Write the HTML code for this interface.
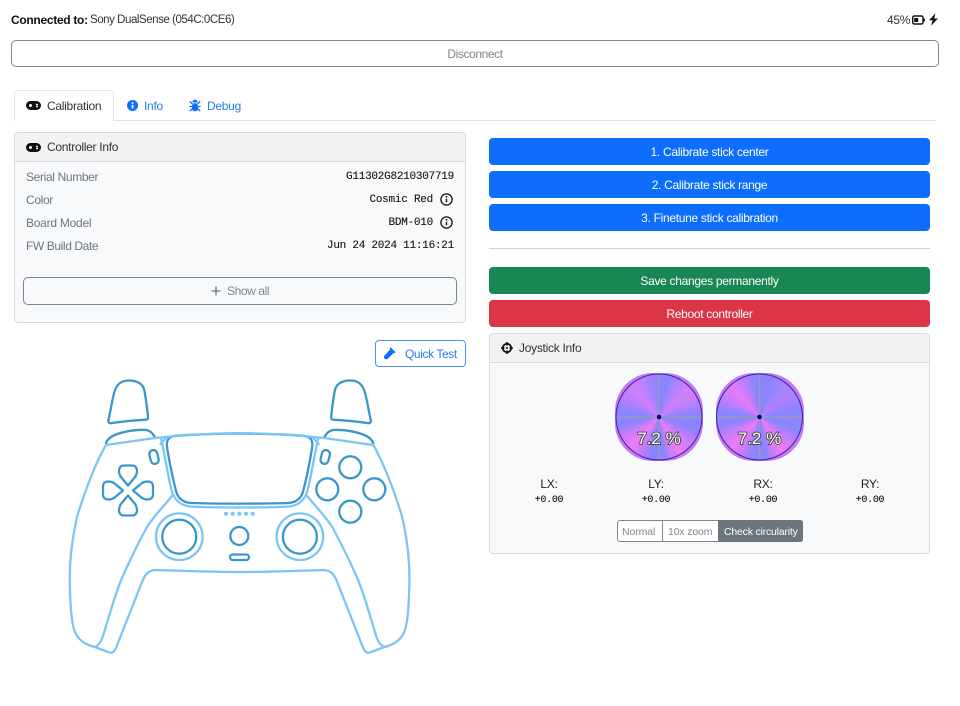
<!DOCTYPE html>
<html><head><meta charset="utf-8"><style>
*{box-sizing:border-box}
html,body{margin:0;padding:0;background:#fff}
body{width:960px;height:706px;position:relative;overflow:hidden;font-family:"Liberation Sans",sans-serif;font-size:12px;color:#212529;letter-spacing:-.28px}
.a{position:absolute;white-space:nowrap;line-height:16px}
.box{position:absolute}
.btn{position:absolute;border-radius:4px;color:#fff;text-align:center;font-size:12px;line-height:28px;height:27px;left:489px;width:441px;letter-spacing:-.3px}
.m{font-family:"Liberation Mono",monospace;font-size:11px;font-weight:400;color:#111;letter-spacing:-.25px;-webkit-text-stroke:.1px #111}
.g{color:#6c757d}
.disc{position:absolute;width:88px;height:88px;border-radius:43%;top:373px;background:#c678f0}
.in{position:absolute;left:1px;top:1px;width:86px;height:86px;border-radius:50%}
svg{position:absolute;overflow:visible}
</style></head><body>

<div class="a" style="left:11px;top:12px;font-weight:700;letter-spacing:-.3px;color:#111">Connected to:</div>
<div class="a" style="left:90px;top:12px;font-size:11.5px;letter-spacing:-.45px;color:#333">Sony DualSense (054C:0CE6)</div>
<div class="a" style="left:887px;top:12px;color:#333">45%</div>
<svg style="left:912px;top:15px" width="13" height="10" viewBox="0 0 13 10"><rect x=".7" y="1" width="10.3" height="8" rx="1.5" fill="none" stroke="#111" stroke-width="1.4"/><rect x="2.2" y="3" width="4" height="4" fill="#111"/><rect x="11.4" y="3.5" width="1.4" height="3" fill="#111"/></svg>
<svg style="left:928px;top:13px" width="11" height="13" viewBox="0 0 11 13"><path d="M7.5 .3 1 7.2h3.6L3 12.7l7-7.2H6.2L7.5.3Z" fill="#111"/></svg>

<div class="box" style="left:11px;top:40px;width:928px;height:27px;border:1px solid #7f868c;border-radius:5px;text-align:center;line-height:26px;color:#7f868c;letter-spacing:-.4px">Disconnect</div>

<div class="box" style="left:14px;top:120px;width:922px;height:1px;background:#dee2e6"></div>
<div class="box" style="left:14px;top:90px;width:100px;height:31px;border:1px solid #e3e6e9;border-bottom:0;border-radius:4px 4px 0 0;background:#fff"></div>
<svg style="left:26px;top:100px" width="15" height="11" viewBox="0 0 15 11"><rect x="0" y="1" width="15" height="9" rx="4.5" fill="#111"/><circle cx="4.5" cy="5.5" r="1.5" fill="#fff"/><circle cx="11" cy="4.600" r="1" fill="#fff"/><circle cx="11" cy="6.600" r=".9" fill="#fff"/></svg>
<div class="a" style="left:47px;top:97.500px;color:#333">Calibration</div>
<svg style="left:127px;top:100px" width="11" height="11" viewBox="0 0 11 11"><circle cx="5.500" cy="5.500" r="5.500" fill="#0d6efd"/><rect x="4.700" y="4.800" width="1.700" height="3.700" fill="#fff"/><circle cx="5.500" cy="3.100" r="1" fill="#fff"/></svg>
<div class="a" style="left:144px;top:97.500px;color:#2b7ce9">Info</div>
<svg style="left:189px;top:99px" width="12" height="13" viewBox="0 0 12 13"><path d="M3.500 3.500C3.500 1.800 4.500.8 6 .8s2.500 1 2.500 2.700Z" fill="#0d6efd"/><rect x="3" y="4.300" width="6" height="8" rx="2.800" fill="#0d6efd"/><path d="M.8 2.500 3.500 5M11.200 2.500 8.500 5M.3 7.500h3M11.700 7.500h-3M.8 12 3.500 9.800M11.200 12 8.500 9.800" stroke="#0d6efd" stroke-width="1.300" fill="none"/></svg>
<div class="a" style="left:207px;top:97.500px;color:#2b7ce9">Debug</div>

<div class="box" style="left:14px;top:132px;width:452px;height:191px;border:1px solid #d7d9dc;border-radius:4px;background:#f8f9fa"></div>
<div class="box" style="left:15px;top:133px;width:450px;height:29px;background:#f1f2f3;border-bottom:1px solid #d7d9dc;border-radius:3px 3px 0 0"></div>
<svg style="left:26px;top:142px" width="15" height="11" viewBox="0 0 15 11"><rect x="0" y="1" width="15" height="9" rx="4.500" fill="#111"/><circle cx="4.500" cy="5.500" r="1.500" fill="#fff"/><circle cx="11" cy="4.600" r="1" fill="#fff"/><circle cx="11" cy="6.600" r=".9" fill="#fff"/></svg>
<div class="a" style="left:47px;top:139px;color:#333">Controller Info</div>

<div class="a g" style="left:26px;top:169px;letter-spacing:-.35px">Serial Number</div>
<div class="a g" style="left:26px;top:192px;letter-spacing:-.35px">Color</div>
<div class="a g" style="left:26px;top:215px;letter-spacing:-.25px">Board Model</div>
<div class="a g" style="left:26px;top:238px;letter-spacing:-.4px">FW Build Date</div>
<div class="a m" style="right:506px;top:169px">G11302G8210307719</div>
<div class="a m" style="right:527px;top:192px">Cosmic Red</div>
<div class="a m" style="right:527px;top:215px">BDM-010</div>
<div class="a m" style="right:506px;top:238px">Jun 24 2024 11:16:21</div>
<svg style="left:440px;top:193px" width="13" height="13" viewBox="0 0 13 13"><circle cx="6.500" cy="6.500" r="5.600" fill="none" stroke="#111" stroke-width="1.300"/><path d="M6.500 5.700v3.600" stroke="#111" stroke-width="1.400"/><circle cx="6.500" cy="3.800" r=".9" fill="#111"/></svg>
<svg style="left:440px;top:216px" width="13" height="13" viewBox="0 0 13 13"><circle cx="6.500" cy="6.500" r="5.600" fill="none" stroke="#111" stroke-width="1.300"/><path d="M6.500 5.700v3.600" stroke="#111" stroke-width="1.400"/><circle cx="6.500" cy="3.800" r=".9" fill="#111"/></svg>

<div class="box" style="left:23px;top:277px;width:434px;height:28px;border:1px solid #7f868c;border-radius:5px"></div>
<svg style="left:211px;top:286px" width="10" height="10" viewBox="0 0 10 10"><path d="M5 .5v9M.5 5h9" stroke="#6c757d" stroke-width="1.300"/></svg>
<div class="a" style="left:227px;top:283px;color:#7f868c;letter-spacing:-.4px">Show all</div>

<div class="box" style="left:375px;top:340px;width:91px;height:27px;border:1px solid #0d6efd;border-radius:4px;opacity:.75"></div>
<svg style="left:383px;top:347px" width="13" height="13" viewBox="0 0 13 13"><path d="M8 1.500 11.500 5 5 11.500c-1 1-2.500 1-3.400.1s-.9-2.400.1-3.400Z" fill="#0d6efd"/><path d="M7 .8l5 5" stroke="#0d6efd" stroke-width="1.500"/></svg>
<div class="a" style="left:405px;top:346px;color:#2b7ce9;letter-spacing:-.4px">Quick Test</div>

<!-- controller -->
<svg style="left:0;top:0" width="960" height="706" viewBox="0 0 960 706" fill="none" stroke-linecap="round" stroke-linejoin="round">
<defs>
<g id="half">
<g stroke="#3c97c9" stroke-width="2.300">
<path d="M110.500 423.300C108.500 423 108 421.500 108.500 419.500C110.500 411 112 401 114 393.500C116 384.500 121.500 380.500 128.500 380.500C136 380.500 143 383 144.500 391C146 400 147.500 409 148 417.500C148.200 419 147.500 419.500 146 419.700C134 420.300 122 421.500 110.500 423.300Z"/>
<path d="M106 443.500C107 439 111 436.500 116 434.500C125 431 134 430 143 429.800C149 429.700 152 432 155 437.500"/>
<path d="M240 433.500C218 433.700 195 434.300 176 435.800C169 436.300 166 440 167 447C169 460 172 475 175.500 489C177 497 182 502.500 191 503C207 503.600 224 503.600 240 503.600"/>
<rect x="150" y="450" width="8" height="14" rx="4" transform="rotate(-14 154 457)"/>
<circle cx="179.300" cy="536.700" r="17"/>
</g>
<g stroke="#7cc5f5" stroke-width="2.300">
<path d="M240 433C215 433.500 190 434.700 170 436.700L155 438L106 445C97 460 85 490 77 517C71 545 69 565 70 590C70.500 610 72 625 75 632C79 641 86 645 95 647L108 652C112 654 114 652 116 648L142 582C145 574 149 570 156 570C185 571 212 572 240 572"/>
<path d="M95 647C99 645 101 642 103 636C109 617 114 597 122 578C130 560 137 545 147 527C154 516 163 507 172 496"/>
<path d="M161 438C165 456 168 476 171.500 490C174 500 181 505.500 190 506.500C207 507.500 224 507.500 240 507.500"/>
<path d="M160.500 444 167 437"/>
<circle cx="179.300" cy="536.700" r="23.300"/>
</g>
</g>
</defs>
<use href="#half"/>
<use href="#half" transform="translate(479.200 0) scale(-1 1)"/>
<g stroke="#3c97c9" stroke-width="2.300">
<g id="dp"><path d="M128 485.500 120.500 476.500C119.300 474.500 119 472.500 119 470C119.500 466.800 121.500 465.500 124 465.500H132C134.500 465.500 136.500 466.800 137 470C137 472.500 136.700 474.500 135.500 476.500Z"/></g>
<use href="#dp" transform="rotate(90 128 490.500)"/>
<use href="#dp" transform="rotate(180 128 490.500)"/>
<use href="#dp" transform="rotate(270 128 490.500)"/>
<circle cx="350.300" cy="467.300" r="11"/>
<circle cx="327.300" cy="489.300" r="11"/>
<circle cx="374.300" cy="489.300" r="11"/>
<circle cx="350.300" cy="511.700" r="11"/>
<circle cx="239.300" cy="536" r="9"/>
<rect x="230" y="554.500" width="19" height="5.500" rx="2.700"/>
</g>
<g fill="#7cc5f5" stroke="none">
<circle cx="226" cy="513.700" r="2"/><circle cx="232.700" cy="513.700" r="2"/><circle cx="239.300" cy="513.700" r="2"/><circle cx="246" cy="513.700" r="2"/><circle cx="252.700" cy="513.700" r="2"/>
</g>
</svg>

<div class="btn" style="top:138px;background:#0d6efd">1. Calibrate stick center</div>
<div class="btn" style="top:171px;background:#0d6efd">2. Calibrate stick range</div>
<div class="btn" style="top:204px;background:#0d6efd">3. Finetune stick calibration</div>
<div class="box" style="left:489px;top:248px;width:441px;height:1px;background:#cfd1d3"></div>
<div class="btn" style="top:267px;background:#198754">Save changes permanently</div>
<div class="btn" style="top:300px;background:#dc3545">Reboot controller</div>

<div class="box" style="left:489px;top:333px;width:441px;height:221px;border:1px solid #d7d9dc;border-radius:4px;background:#f8f9fa"></div>
<div class="box" style="left:490px;top:334px;width:439px;height:29px;background:#f1f2f3;border-bottom:1px solid #d7d9dc;border-radius:3px 3px 0 0"></div>
<svg style="left:501px;top:342px" width="12" height="12" viewBox="0 0 12 12"><circle cx="6" cy="6" r="4.200" fill="none" stroke="#111" stroke-width="1.800"/><path d="M6 0v3.500M6 8.500V12M0 6h3.500M8.500 6H12" stroke="#111" stroke-width="1.500"/><circle cx="6" cy="6" r="1" fill="#111"/></svg>
<div class="a" style="left:519px;top:340px;color:#333">Joystick Info</div>

<div class="disc" style="left:615px"><div class="in" style="background:conic-gradient(#8a85ff 0deg,#8a85ff 14deg,#a683ff 24deg,#d080fb 45deg,#c080fb 65deg,#8c85ff 85deg,#8a85ff 110deg,#c07dfb 125deg,#f07cf5 150deg,#c07dfb 165deg,#8a85ff 172deg,#8a85ff 192deg,#c07dfb 205deg,#f07cf5 222deg,#c07dfb 245deg,#8a85ff 258deg,#8a85ff 280deg,#b07fff 295deg,#d080fb 320deg,#a683ff 345deg,#8a85ff 360deg)"></div></div>
<div class="disc" style="left:716px"><div class="in" style="background:conic-gradient(#8a85ff 0deg,#8a85ff 20deg,#a683ff 35deg,#b080ff 55deg,#8c85ff 75deg,#8a85ff 110deg,#c07dfb 125deg,#f07cf5 148deg,#c07dfb 162deg,#8a85ff 170deg,#8a85ff 190deg,#c07dfb 205deg,#f07cf5 222deg,#c07dfb 245deg,#8a85ff 258deg,#8a85ff 280deg,#c07dfb 295deg,#e87cf5 318deg,#b07fff 340deg,#8a85ff 350deg,#8a85ff 360deg)"></div></div>
<svg style="left:0;top:0" width="960" height="706" viewBox="0 0 960 706" fill="none">
<g stroke="#9c9cae" stroke-width="1.200">
<path d="M659 374v86M616 417h86M759.500 374v86M716.500 417h86"/>
</g>
<circle cx="659" cy="417" r="43" stroke="#3e1fb4" stroke-width="1"/>
<circle cx="759.500" cy="417" r="43" stroke="#3e1fb4" stroke-width="1"/>
<circle cx="659" cy="417" r="2.300" fill="#00006e"/>
<circle cx="759.500" cy="417" r="2.300" fill="#00006e"/>
<g font-family="'Liberation Sans',sans-serif" font-size="17" text-anchor="middle" fill="#fff" stroke="#444" stroke-width="1.800" paint-order="stroke" letter-spacing="0">
<text x="659" y="444">7.2 %</text>
<text x="759.500" y="444">7.2 %</text>
</g>
</svg>

<div class="a" style="left:499px;width:100px;text-align:center;top:476px;color:#222">LX:</div>
<div class="a" style="left:606px;width:100px;text-align:center;top:476px;color:#222">LY:</div>
<div class="a" style="left:713px;width:100px;text-align:center;top:476px;color:#222">RX:</div>
<div class="a" style="left:820px;width:100px;text-align:center;top:476px;color:#222">RY:</div>
<div class="a m" style="left:499px;width:100px;text-align:center;top:493px;font-size:10px;letter-spacing:-.3px">+0.00</div>
<div class="a m" style="left:606px;width:100px;text-align:center;top:493px;font-size:10px;letter-spacing:-.3px">+0.00</div>
<div class="a m" style="left:713px;width:100px;text-align:center;top:493px;font-size:10px;letter-spacing:-.3px">+0.00</div>
<div class="a m" style="left:820px;width:100px;text-align:center;top:493px;font-size:10px;letter-spacing:-.3px">+0.00</div>

<div class="box" style="left:617px;top:520px;width:186px;height:22px;border:1px solid #7f868c;border-radius:3px;background:#fff"></div>
<div class="box" style="left:662px;top:520px;width:1px;height:22px;background:#7f868c"></div>
<div class="box" style="left:718px;top:520px;width:85px;height:22px;background:#6c757d;border-radius:0 3px 3px 0"></div>
<div class="a" style="left:622px;top:523.500px;font-size:10.500px;letter-spacing:-.1px;color:#7f868c">Normal</div>
<div class="a" style="left:668px;top:523.500px;font-size:10.500px;letter-spacing:-.15px;color:#7f868c">10x zoom</div>
<div class="a" style="left:724px;top:523.500px;font-size:10.500px;letter-spacing:-.2px;color:#fff">Check circularity</div>
</body></html>
